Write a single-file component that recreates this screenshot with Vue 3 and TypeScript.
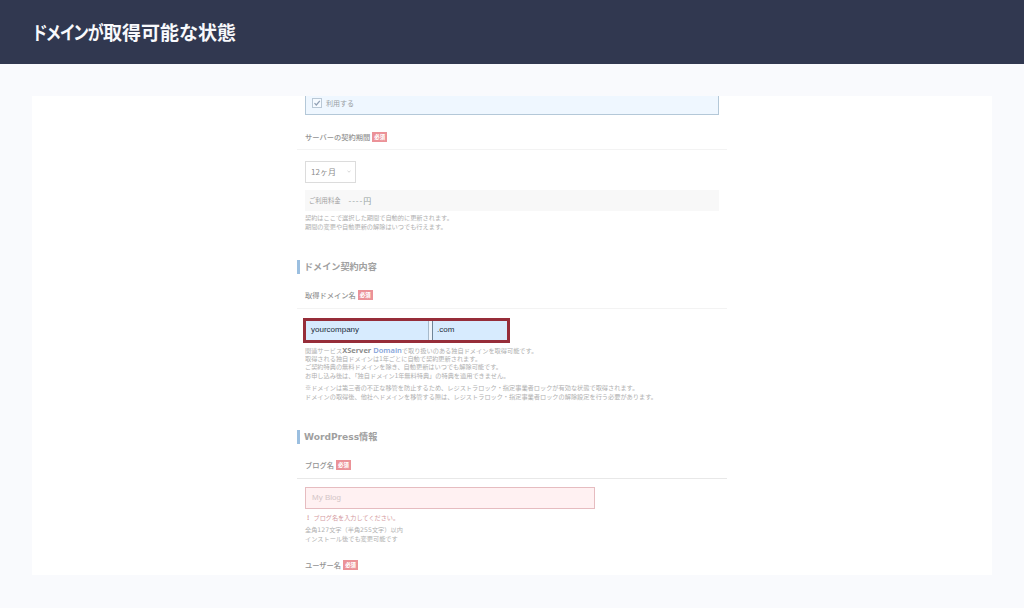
<script setup lang="ts">
const periodNotes: string[] = [
  '契約はここで選択した期間で自動的に更新されます。',
  '期間の変更や自動更新の解除はいつでも行えます。',
]
const domainNotes: string[] = [
  '取得される独自ドメインは1年ごとに自動で契約更新されます。',
  'ご契約特典の無料ドメインを除き、自動更新はいつでも解除可能です。',
  'お申し込み後は、「独自ドメイン1年無料特典」の特典を適用できません。',
]
const transferNotes: string[] = [
  '※ドメインは第三者の不正な移管を防止するため、レジストラロック・指定事業者ロックが有効な状態で取得されます。',
  'ドメインの取得後、他社へドメインを移管する際は、レジストラロック・指定事業者ロックの解除設定を行う必要があります。',
]
const blogNotes: string[] = ['全角127文字（半角255文字）以内', 'インストール後でも変更可能です']
</script>

<template>
  <div class="page">
    <header class="header"><h1><span class="kana">ドメインが</span><span>取得可能な状態</span></h1></header>
    <main class="sheet">
      <div class="form">
        <div class="use">
          <svg class="check" viewBox="0 0 10 10"><rect x=".5" y=".5" width="9" height="9" /><path d="M2.5 5.2 4.3 7 7.8 2.8" /></svg>
          <span>利用する</span>
        </div>

        <div class="label first"><span>サーバーの契約期間</span><b>必須</b></div>
        <div class="select"><span>12ヶ月</span><svg viewBox="0 0 4 3"><path d="M.5 .8 2 2.2 3.5 .8" /></svg></div>
        <div class="price"><span>ご利用料金</span><em>----円</em></div>
        <div class="notes period"><p v-for="n in periodNotes" :key="n">{{ n }}</p></div>

        <h2 class="domain-title">ドメイン契約内容</h2>
        <div class="label"><span>取得ドメイン名</span><b>必須</b></div>
        <div class="domain"><div class="name">yourcompany</div><div class="tld">.com</div></div>
        <div class="notes about">
          <p>関連サービス<strong>XServer <i>Domain</i></strong>で取り扱いのある独自ドメインを取得可能です。</p>
          <p v-for="n in domainNotes" :key="n">{{ n }}</p>
        </div>
        <div class="notes transfer"><p v-for="n in transferNotes" :key="n">{{ n }}</p></div>

        <h2 class="wp-title">WordPress情報</h2>
        <div class="label strong-line"><span>ブログ名</span><b>必須</b></div>
        <div class="blog">My Blog</div>
        <div class="error"><span class="mark">!</span>ブログ名を入力してください。</div>
        <div class="notes blog-notes"><p v-for="n in blogNotes" :key="n">{{ n }}</p></div>
        <div class="label last"><span>ユーザー名</span><b>必須</b></div>
      </div>
    </main>
  </div>
</template>

<style>
body { margin: 0; }
</style>

<style scoped>
* { box-sizing: border-box; }
.page {
  width: 1024px;
  height: 608px;
  background: #f9fafd;
  overflow: hidden;
  font-family: "Noto Sans CJK JP", sans-serif;
}
.header {
  height: 64px;
  padding: 0 33px;
  background: #313850;
  display: flex;
  align-items: center;
}
h1 {
  display: flex;
  margin: 0;
  color: #f8f9fc;
  font-size: 19px;
  line-height: 28px;
  font-weight: 700;
  white-space: nowrap;
}
.kana {
  width: 70px;
  font-feature-settings: "palt";
  letter-spacing: -.7px;
  transform: scaleX(.84);
  transform-origin: left center;
}
.sheet {
  height: 479px;
  margin: 32px 32px 0;
  padding-left: 265px;
  background: #fff;
  overflow: hidden;
}
.form { width: 430px; white-space: nowrap; color: #a0a0a0; }
.use {
  width: 414px;
  height: 19px;
  margin-left: 8px;
  padding: 0 0 4px 6px;
  display: flex;
  align-items: center;
  gap: 4px;
  background: #eff7ff;
  border: 1px solid #b4c8d8;
  border-top: 0;
  font-size: 7px;
  line-height: 10px;
  color: #9a9fa4;
}
.check { width: 10px; height: 10px; fill: #f5faff; stroke: #b9c8d6; stroke-width: 1; }
.check path { fill: none; stroke: #8f9fb4; stroke-width: 1.2; }
.label {
  height: 28px;
  padding: 0 0 0 8px;
  display: flex;
  align-items: center;
  gap: 2px;
  border-bottom: 1px solid #f3f3f3;
  font-size: 7.25px;
  line-height: 10px;
  font-weight: 500;
  color: #949494;
}
.label b {
  width: 15px;
  height: 10px;
  background: #eb9298;
  color: #fff;
  font-size: 5.4px;
  line-height: 10px;
  font-weight: 900;
  text-align: center;
}
.first { margin-top: 8px; height: 27px; padding-top: 1px; }
.select {
  width: 51px;
  height: 22px;
  margin: 11px 0 0 8px;
  padding: 0 4px 1px 5px;
  display: flex;
  align-items: center;
  justify-content: space-between;
  border: 1px solid #dcdcdc;
  font-size: 8px;
  line-height: 12px;
  color: #8c8c8c;
}
.select svg { width: 4px; height: 3px; fill: none; stroke: #c4c4c4; stroke-width: .7; }
.price {
  width: 414px;
  height: 21px;
  margin: 7px 0 0 8px;
  padding: 0 0 1px 4px;
  display: flex;
  align-items: center;
  gap: 8px;
  background: #f8f8f8;
  font-size: 6.3px;
}
.price em { font-style: normal; font-size: 8px; color: #95a3a0; letter-spacing: .9px; }
.notes {
  margin-left: 8px;
  font-size: 6.19px;
  line-height: 8.5px;
  color: #b0b0b0;
}
.notes p { margin: 0; }
.period { margin-top: 3px; }
h2 {
  height: 14px;
  margin: 0;
  padding-left: 4px;
  border-left: 3px solid #9bbfe0;
  font-size: 9.1px;
  line-height: 14px;
  font-weight: 700;
  color: #a0a0a0;
}
.domain-title { margin-top: 29px; margin-bottom: 7px; line-height: 13px; }
.domain {
  width: 207px;
  height: 25px;
  margin: 9px 0 0 6px;
  display: flex;
  gap: 3px;
  border: 3px solid #962d39;
  background: #eef4fb;
  font-family: "Liberation Sans", Arial, sans-serif;
  font-size: 8px;
  line-height: 18px;
  color: #1c2b39;
}
.name { width: 123px; padding-left: 5px; background: #d7ebfe; border-right: 1px solid #a7bacb; }
.tld { flex: 1; padding-left: 4px; background: #d7ebfe; border-left: 1px solid #6f8497; }
.about { margin-top: 3px; }
.about p { height: 8.5px; }
.about strong { font-family: "Noto Sans", sans-serif; font-size: 7.5px; line-height: 8px; font-weight: 700; color: #8c8c8c; }
.about i { font-style: normal; font-weight: 600; color: #86a4da; }
.transfer { margin-top: 4px; }
.wp-title {
  margin-top: 29px;
  margin-bottom: 7px;
  font-family: "DejaVu Sans", "Noto Sans CJK JP", sans-serif;
}
.strong-line { border-color: #e8e8e8; }
.blog {
  width: 290px;
  height: 22px;
  margin: 8px 0 0 8px;
  padding-left: 6px;
  background: #fff1f2;
  border: 1px solid #e6bcc0;
  font-family: "Liberation Sans", Arial, sans-serif;
  font-size: 8px;
  line-height: 20px;
  color: #d3c5c7;
}
.error { margin: 4px 0 0 8px; display: flex; font-size: 6.15px; line-height: 10px; color: #d4999e; }
.mark { width: 8.5px; padding-left: 2px; font-weight: 700; }
.blog-notes { margin-top: 3px; font-family: "DejaVu Sans", "Noto Sans CJK JP", sans-serif; }
.last { margin-top: 8px; border: 0; }
</style>
